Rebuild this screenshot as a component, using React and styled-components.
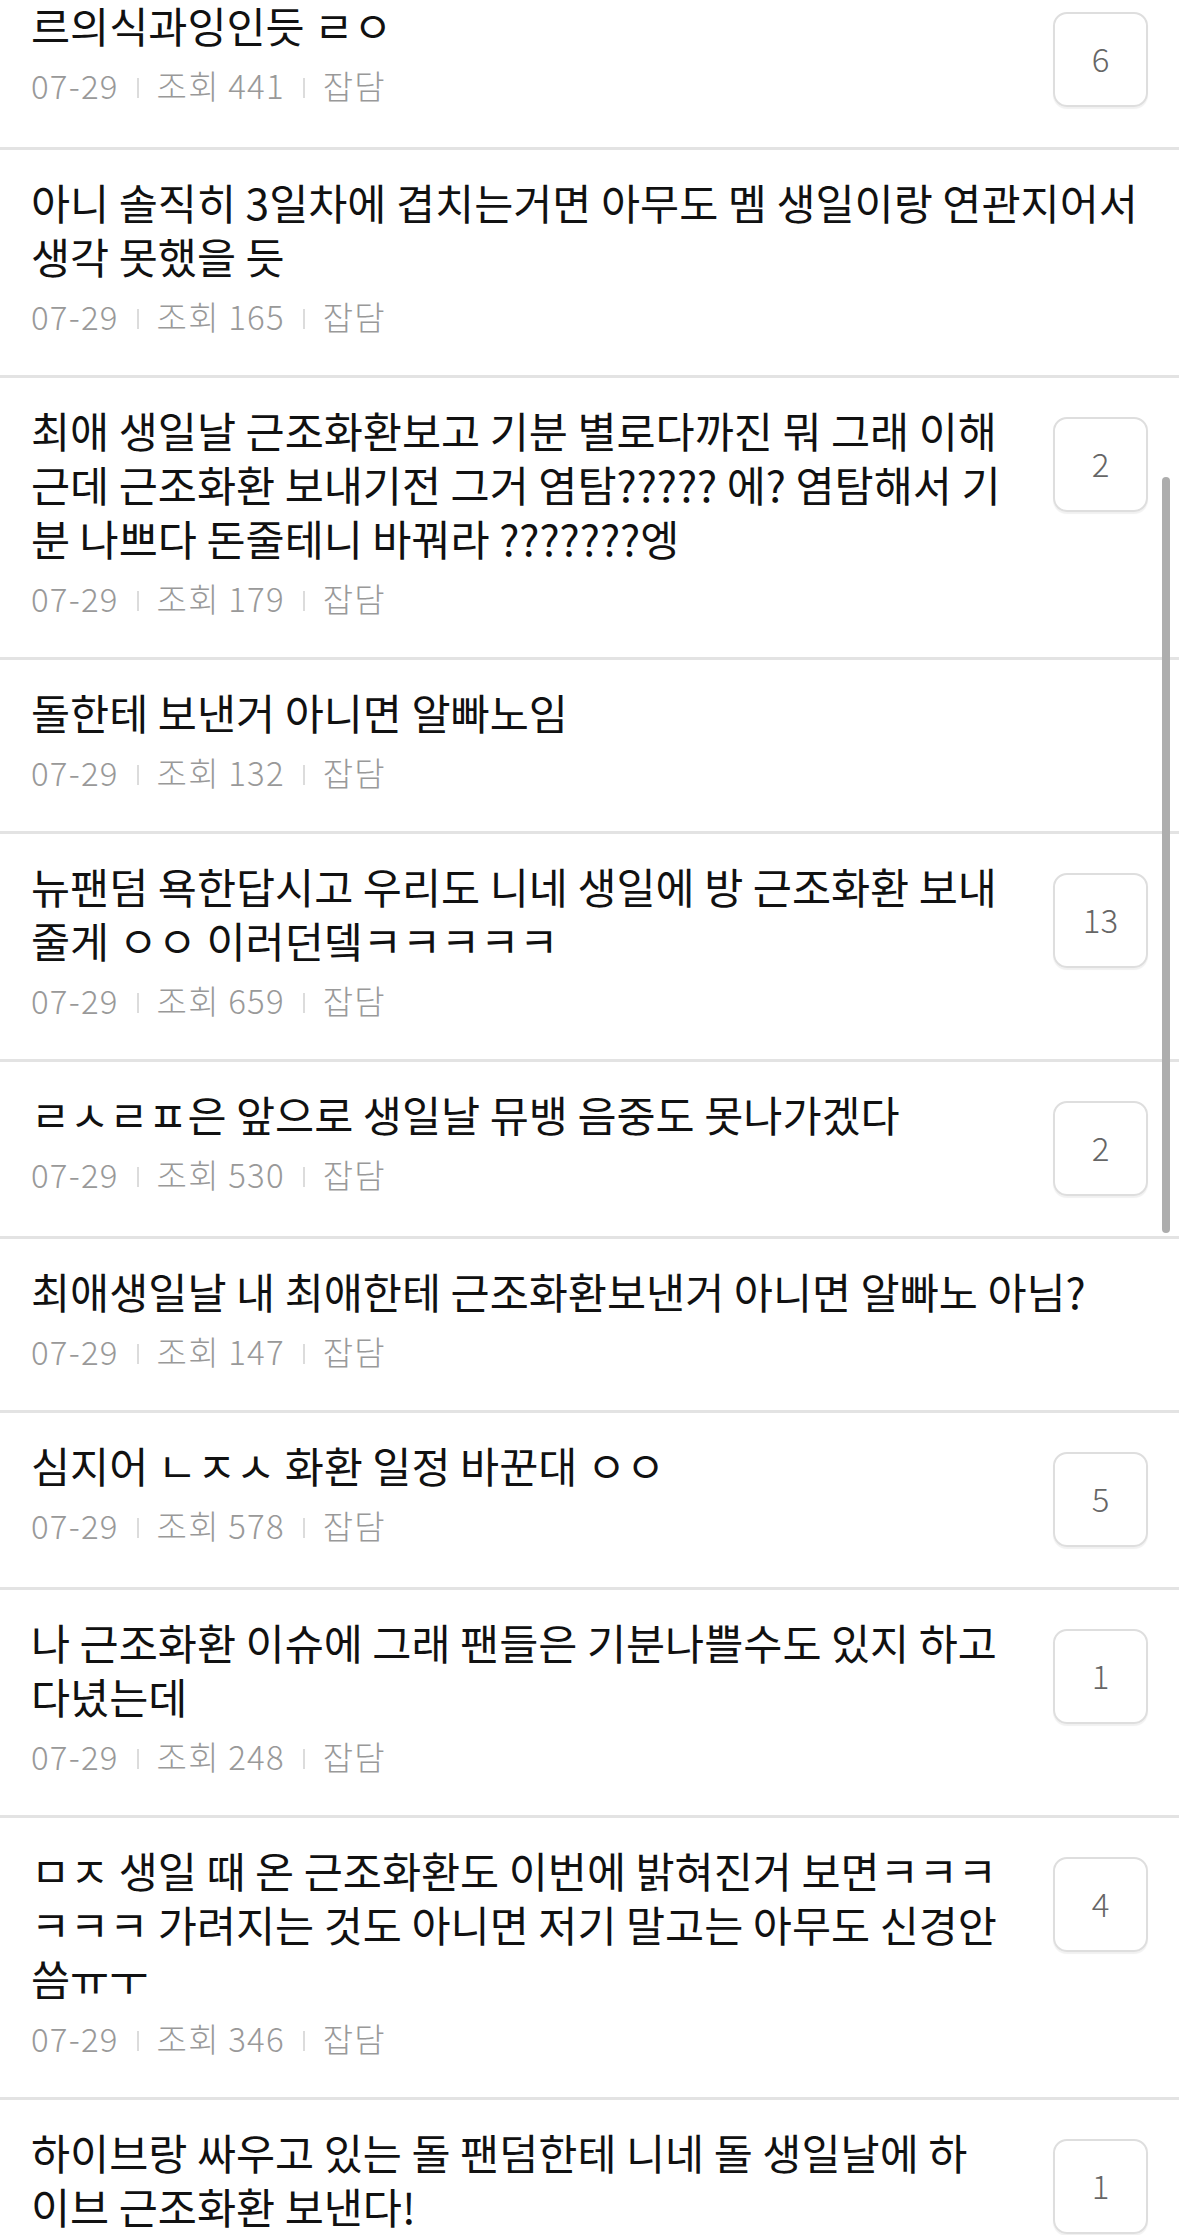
import React from 'react';
import styled, { createGlobalStyle } from 'styled-components';

const GlobalStyle = createGlobalStyle`
  html, body {
    margin: 0;
    padding: 0;
    background: #ffffff;
  }
  body {
    font-family: "Noto Sans CJK KR", "Noto Sans", sans-serif;
  }
`;

const Screen = styled.div`
  position: relative;
  height: 2235px;
  overflow: hidden;
  background: #ffffff;
`;

const List = styled.ul`
  list-style: none;
  margin: -27px 0 0;
  padding: 0;
`;

const Item = styled.li`
  display: flex;
  align-items: flex-start;
  gap: 52px;
  padding: 25px 31px 40px;
  border-bottom: 3px solid #e3e3e3;
`;

const Body = styled.div`
  flex: 1;
  min-width: 0;
`;

const Title = styled.div`
  font-size: 42.5px;
  line-height: 54px;
  color: #111111;
`;

const Meta = styled.div`
  display: flex;
  align-items: center;
  margin-top: 14px;
  height: 38px;
  font-size: 33px;
  font-weight: 300;
  line-height: 38px;
  letter-spacing: 1.2px;
  color: #999999;
`;

const Sep = styled.span`
  width: 2px;
  height: 20px;
  background: #dcdcdc;
  margin: 5px 18px 0;
`;

const Badge = styled.div`
  flex: none;
  width: 95px;
  height: 95px;
  box-sizing: border-box;
  margin-top: 14px;
  border: 2px solid #dedede;
  border-radius: 14px;
  box-shadow: 0 2px 1px rgba(0, 0, 0, 0.06);
  display: flex;
  align-items: center;
  justify-content: center;
  font-size: 33px;
  font-weight: 300;
  color: #666666;
  padding-bottom: 4px;
`;

const Scrollbar = styled.div`
  position: absolute;
  top: 477px;
  right: 9px;
  width: 8px;
  height: 756px;
  border-radius: 4px;
  background: #adadad;
`;

const posts = [
  { title: '르의식과잉인듯 ㄹㅇ', views: 441, comments: 6 },
  { title: '아니 솔직히 3일차에 겹치는거면 아무도 멤 생일이랑 연관지어서 생각 못했을 듯', views: 165 },
  {
    title:
      '최애 생일날 근조화환보고 기분 별로다까진 뭐 그래 이해 근데 근조화환 보내기전 그거 염탐????? 에? 염탐해서 기분 나쁘다 돈줄테니 바꿔라 ???????엥',
    views: 179,
    comments: 2,
  },
  { title: '돌한테 보낸거 아니면 알빠노임', views: 132 },
  {
    title: '뉴팬덤 욕한답시고 우리도 니네 생일에 방 근조화환 보내 줄게 ㅇㅇ 이러던뎈ㅋㅋㅋㅋㅋ',
    views: 659,
    comments: 13,
  },
  { title: 'ㄹㅅㄹㅍ은 앞으로 생일날 뮤뱅 음중도 못나가겠다', views: 530, comments: 2 },
  { title: '최애생일날 내 최애한테 근조화환보낸거 아니면 알빠노 아님?', views: 147 },
  { title: '심지어 ㄴㅈㅅ 화환 일정 바꾼대 ㅇㅇ', views: 578, comments: 5 },
  { title: '나 근조화환 이슈에 그래 팬들은 기분나쁠수도 있지 하고 다녔는데', views: 248, comments: 1 },
  {
    title:
      'ㅁㅈ 생일 때 온 근조화환도 이번에 밝혀진거 보면ㅋㅋㅋㅋㅋㅋ 가려지는 것도 아니면 저기 말고는 아무도 신경안 씀ㅠㅜ',
    views: 346,
    comments: 4,
  },
  { title: '하이브랑 싸우고 있는 돌 팬덤한테 니네 돌 생일날에 하이브 근조화환 보낸다!', views: 211, comments: 1 },
];

export default function App() {
  return (
    <Screen>
      <GlobalStyle />
      <List>
        {posts.map((p, i) => (
          <Item key={i}>
            <Body>
              <Title>{p.title}</Title>
              <Meta>
                <span>07-29</span>
                <Sep />
                <span>조회 {p.views}</span>
                <Sep />
                <span>잡담</span>
              </Meta>
            </Body>
            {p.comments != null && <Badge>{p.comments}</Badge>}
          </Item>
        ))}
      </List>
      <Scrollbar />
    </Screen>
  );
}
